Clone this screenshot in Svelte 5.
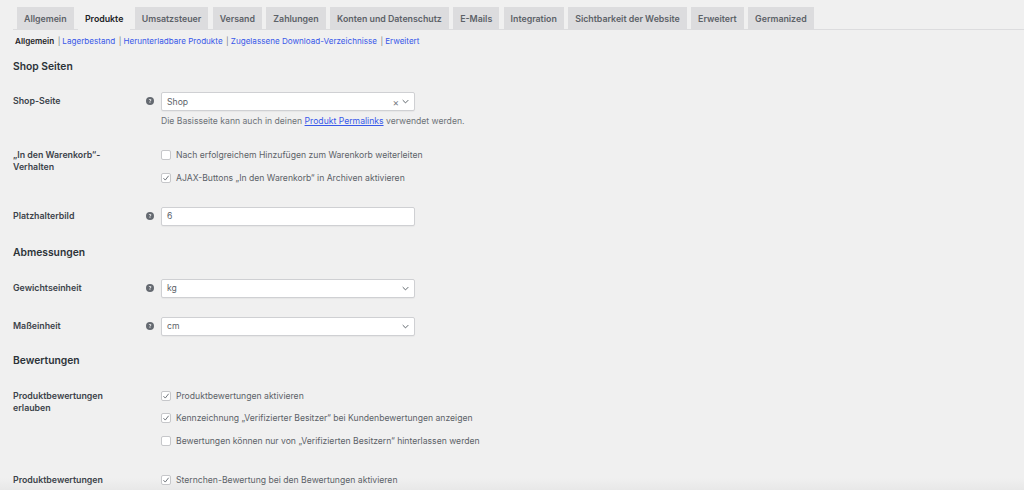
<script lang="ts">
  const tabs = ['Allgemein', 'Produkte', 'Umsatzsteuer', 'Versand', 'Zahlungen', 'Konten und Datenschutz', 'E-Mails', 'Integration', 'Sichtbarkeit der Website', 'Erweitert', 'Germanized'];
  const subs = ['Lagerbestand', 'Herunterladbare Produkte', 'Zugelassene Download-Verzeichnisse', 'Erweitert'];
</script>

{#snippet help()}
  <svg class="help" viewBox="0 0 16 16" aria-hidden="true">
    <circle cx="8" cy="8" r="8" fill="#646970" />
    <path d="M5.4 6.2c.1-1.6 1.2-2.4 2.7-2.4 1.5 0 2.6.8 2.6 2.1 0 1-.6 1.5-1.3 2-.6.4-.8.6-.8 1.2v.3H7.1v-.5c0-.9.4-1.3 1-1.8.5-.3.8-.6.8-1.1 0-.5-.3-.8-.9-.8-.6 0-.9.4-1 1z" fill="#f0f0f1" />
    <rect x="7.1" y="10.4" width="1.7" height="1.7" fill="#f0f0f1" />
  </svg>
{/snippet}

{#snippet chevron()}
  <svg class="chevron" viewBox="0 0 10 6" aria-hidden="true">
    <path d="M1 1l4 4 4-4" fill="none" stroke="#50575e" stroke-width="1.3" />
  </svg>
{/snippet}

{#snippet check(label: string, on: boolean)}
  <label class="check">
    <span class="box">
      {#if on}
        <svg viewBox="0 0 10 10" aria-hidden="true">
          <path d="M1.8 5.2l2.3 2.4 4.2-5.4" fill="none" stroke="#6d7278" stroke-width="1.2" />
        </svg>
      {/if}
    </span>
    {label}
  </label>
{/snippet}

<div class="page">
  <nav class="tabs">
    {#each tabs as tab}
      <span class="tab" class:active={tab === 'Produkte'}>{tab}</span>
    {/each}
  </nav>

  <ul class="subs">
    <li class="current">Allgemein</li>
    {#each subs as sub}
      <li><span class="sep">|</span><a href="#top">{sub}</a></li>
    {/each}
  </ul>

  <h2 class="first">Shop Seiten</h2>

  <div class="row shop">
    <div class="label">Shop-Seite</div>
    {@render help()}
    <div class="field">
      <div class="select">
        <span>Shop</span>
        <span class="clear">×</span>
        {@render chevron()}
      </div>
      <p class="desc">Die Basisseite kann auch in deinen <a href="#top">Produkt Permalinks</a> verwendet werden.</p>
    </div>
  </div>

  <div class="row cart">
    <div class="label">„In den Warenkorb“-<br />Verhalten</div>
    <div></div>
    <div class="checks">
      {@render check('Nach erfolgreichem Hinzufügen zum Warenkorb weiterleiten', false)}
      {@render check('AJAX-Buttons „In den Warenkorb“ in Archiven aktivieren', true)}
    </div>
  </div>

  <div class="row placeholder">
    <div class="label">Platzhalterbild</div>
    {@render help()}
    <div class="field"><div class="select">6</div></div>
  </div>

  <h2 class="dim">Abmessungen</h2>

  <div class="row weight">
    <div class="label">Gewichtseinheit</div>
    {@render help()}
    <div class="field"><div class="select"><span>kg</span>{@render chevron()}</div></div>
  </div>

  <div class="row size">
    <div class="label">Maßeinheit</div>
    {@render help()}
    <div class="field"><div class="select"><span>cm</span>{@render chevron()}</div></div>
  </div>

  <h2 class="reviews">Bewertungen</h2>

  <div class="row allow">
    <div class="label">Produktbewertungen<br />erlauben</div>
    <div></div>
    <div class="checks">
      {@render check('Produktbewertungen aktivieren', true)}
      {@render check('Kennzeichnung „Verifizierter Besitzer“ bei Kundenbewertungen anzeigen', true)}
      {@render check('Bewertungen können nur von „Verifizierten Besitzern“ hinterlassen werden', false)}
    </div>
  </div>

  <div class="row stars">
    <div class="label">Produktbewertungen</div>
    <div></div>
    <div class="checks">
      {@render check('Sternchen-Bewertung bei den Bewertungen aktivieren', true)}
    </div>
  </div>
</div>

<style>
  :global(body) {
    margin: 0;
    background: #f0f0f0;
    overflow: hidden;
  }

  .page {
    height: 490px;
    overflow: hidden;
    box-sizing: border-box;
    padding: 7px 0 0 13px;
    background: linear-gradient(to top, #e8e8e8, #f0f0f0 12px);
    font-family: Inter, "Liberation Sans", sans-serif;
    font-size: 8.63px;
    line-height: 12px;
    color: #5c6268;
  }

  .tabs {
    display: flex;
    gap: 4.4px;
    padding-left: 4px;
    border-bottom: 1px solid #dcdcde;
    height: 22px;
    font-size: 8.8px;
    font-weight: 600;
  }
  .tab {
    padding: 0 7px;
    height: 22px;
    line-height: 23px;
    background: #dcdcde;
    color: #5c6268;
  }
  .tab.active {
    height: 23px;
    background: #f0f0f0;
    color: #1d2327;
  }

  .subs {
    list-style: none;
    display: flex;
    gap: 3.5px;
    margin: 5px 0 0 2px;
    padding: 0;
    font-size: 8.1px;
    height: 12px;
  }
  .subs .current { color: #1d2327; font-weight: 600; }
  .sep { color: #787c82; margin-right: 2px; }
  a { color: #3858e9; }
  .subs a { text-decoration: none; }

  h2 {
    margin: 0;
    font-size: 10.3px;
    line-height: 14px;
    font-weight: 600;
    color: #2c3338;
  }
  h2.first { margin-top: 12px; }
  h2.dim { margin-top: 19px; }
  h2.reviews { margin-top: 17px; }

  .row {
    display: grid;
    grid-template-columns: 133px 15px 254px;
    align-items: start;
  }
  .row.shop { margin-top: 19px; }
  .row.cart { margin-top: 22px; }
  .row.placeholder { margin-top: 23px; }
  .row.weight { margin-top: 20px; }
  .row.size { margin-top: 19px; }
  .row.allow { margin-top: 23px; }
  .row.stars { margin-top: 27px; }

  .label {
    font-size: 8.8px;
    font-weight: 600;
    color: #3c434a;
  }
  .shop .label, .placeholder .label, .weight .label, .size .label { padding-top: 3px; }

  .help {
    width: 8px;
    height: 8px;
    margin-top: 5px;
  }

  .select {
    box-sizing: border-box;
    display: flex;
    align-items: center;
    width: 254px;
    height: 19px;
    padding: 0 5px;
    background: #fff;
    border: 1px solid #cfd0d3;
    border-radius: 2px;
    box-shadow: 0 1px 1px rgba(0, 0, 0, 0.04);
    color: #5c6268;
  }
  .select span:first-child { flex: 1; }
  .clear { color: #787c82; font-size: 10px; margin-right: 1px; }
  .chevron { width: 7px; height: 5px; margin-left: 2px; }

  .desc {
    margin: 4px 0 0;
    white-space: nowrap;
    color: #6d7278;
  }

  .checks {
    display: flex;
    flex-direction: column;
    gap: 10.5px;
  }
  .check {
    display: flex;
    align-items: center;
    gap: 5px;
    height: 12px;
    white-space: nowrap;
  }
  .box {
    box-sizing: border-box;
    flex: none;
    display: flex;
    width: 10px;
    height: 10px;
    background: #fff;
    border: 1px solid #c6c7ca;
    border-radius: 2px;
  }
  .box svg { width: 100%; height: 100%; }
</style>
